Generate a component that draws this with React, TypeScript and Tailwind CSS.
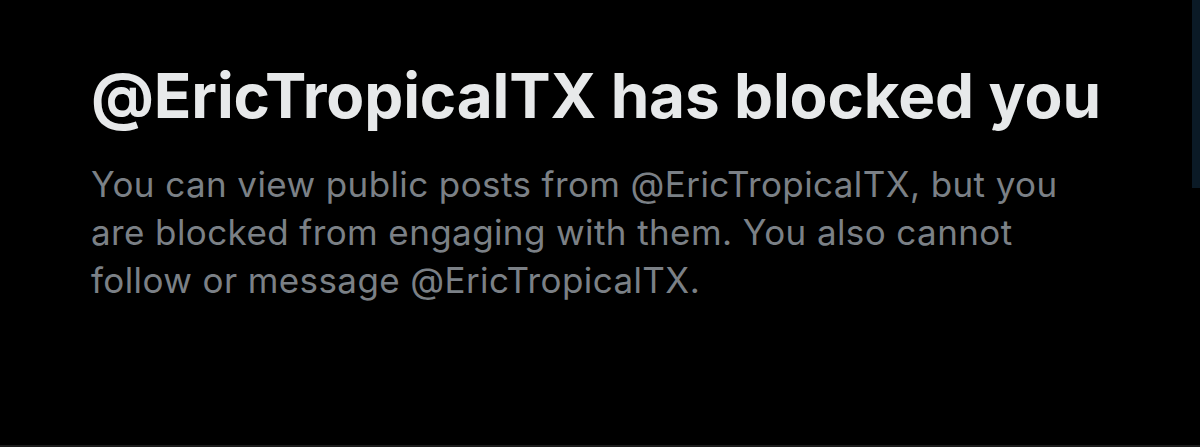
export default function App() {
  return (
    <div className="flex h-[447px] w-full overflow-hidden border-b-2 border-[#1c1c1c] bg-black">
      <div className="flex-1 pl-[91px] pr-[40px] pt-[58px]">
        <h1 className="font-['Inter',sans-serif] text-[62px] leading-[76px] font-bold tracking-[-0.15px] text-[#e7e9ea]">
          @EricTropicalTX has blocked you
        </h1>
        <p className="mt-[26px] max-w-[1010px] font-['Inter',sans-serif] text-[35px] leading-[48px] tracking-[0.4px] text-[#7b8086]">
          You can view public posts from @EricTropicalTX, but you are blocked from engaging with them. You also cannot
          follow or message @EricTropicalTX.
        </p>
      </div>
      <div className="w-[8px] shrink-0">
        <div className="h-[188px] bg-[#0b1a26]" />
      </div>
    </div>
  );
}
